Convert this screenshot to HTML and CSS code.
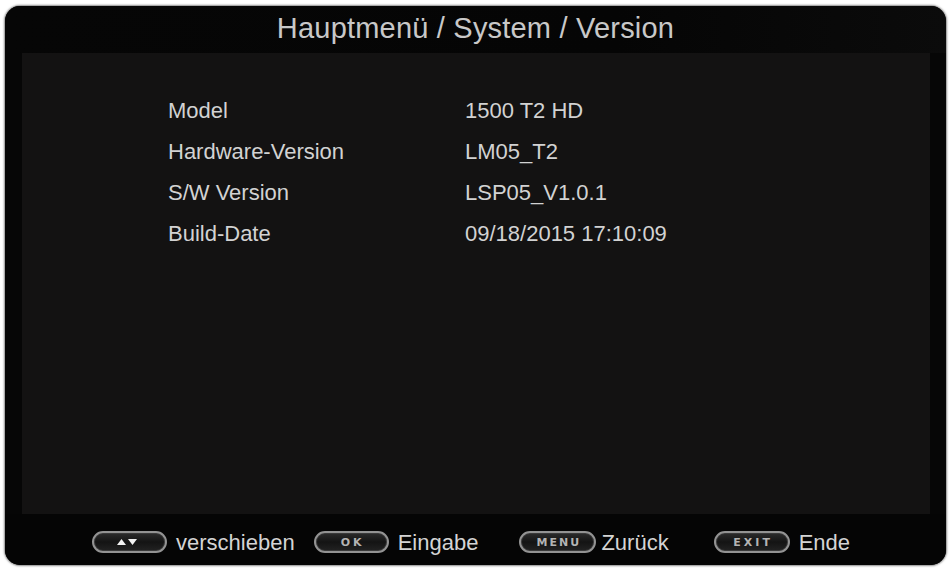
FILE: index.html
```html
<!DOCTYPE html>
<html lang="de">
<head>
<meta charset="utf-8">
<title>Hauptmenü / System / Version</title>
<link rel="stylesheet" href="styles.css">
</head>
<body>
<div class="frame">
  <header class="title">Hauptmenü / System / Version</header>
  <main class="panel">
    <div class="info">
      <div class="label">Model</div><div class="value">1500 T2 HD</div>
      <div class="label">Hardware-Version</div><div class="value">LM05_T2</div>
      <div class="label">S/W Version</div><div class="value">LSP05_V1.0.1</div>
      <div class="label">Build-Date</div><div class="value">09/18/2015 17:10:09</div>
    </div>
  </main>
  <footer class="footer">
    <div class="hint hint-move">
      <span class="pill pill-arrows"><svg width="22" height="6" viewBox="0 0 22 6"><polygon points="0,6 4.5,0 9,6" fill="#f2f2f2"/><polygon points="11,0 20,0 15.5,6" fill="#f2f2f2"/></svg></span>
      <span class="hint-text">verschieben</span>
    </div>
    <div class="hint hint-ok">
      <span class="pill">OK</span>
      <span class="hint-text">Eingabe</span>
    </div>
    <div class="hint hint-menu">
      <span class="pill">MENU</span>
      <span class="hint-text">Zurück</span>
    </div>
    <div class="hint hint-exit">
      <span class="pill">EXIT</span>
      <span class="hint-text">Ende</span>
    </div>
  </footer>
</div>
</body>
</html>
```
FILE: styles.css
```css
html, body {
  margin: 0;
  padding: 0;
  background: #ffffff;
}

body {
  font-family: "Liberation Sans", Arial, sans-serif;
  padding: 6px 4px 8px 5px;
}

.frame {
  height: 559px;
  background: #060606;
  border-radius: 15px;
  box-shadow: 0 0 2px 1px rgba(90, 90, 90, 0.7);
  display: flex;
  flex-direction: column;
  overflow: hidden;
}

.title {
  height: 47px;
  box-sizing: border-box;
  padding-bottom: 3px;
  line-height: 44px;
  text-align: center;
  font-size: 29px;
  letter-spacing: 0.2px;
  color: #c8c8c8;
  background: linear-gradient(90deg, #060606 0%, #050505 65%, #0b0b0b 100%);
}

.panel {
  height: 461px;
  margin: 0 16px 0 17px;
  background: #131212;
  box-sizing: border-box;
  padding: 37px 0 0 146px;
}

.info {
  display: grid;
  grid-template-columns: 297px auto;
  grid-auto-rows: 41px;
  line-height: 41px;
  font-size: 22px;
  color: #d2d2d2;
}

.footer {
  flex: 1;
  box-sizing: border-box;
  padding: 5px 0 0 87px;
  display: flex;
  align-items: center;
  background: #050505;
}

.hint {
  display: flex;
  align-items: center;
  gap: 9px;
}

.hint-ok { margin-left: 19px; }
.hint-menu { margin-left: 41px; gap: 5px; }
.hint-exit { margin-left: 45px; }

.hint-text {
  font-size: 22px;
  color: #d4d4d4;
  line-height: 25px;
}

.pill {
  width: 75px;
  height: 22px;
  box-sizing: border-box;
  border: 2px solid #939393;
  border-radius: 11px;
  background: linear-gradient(180deg, #2c2c2c 0%, #141414 50%, #222222 100%);
  box-shadow: inset 0 0 0 1px #3a3a3a;
  display: flex;
  align-items: center;
  justify-content: center;
  padding-left: 3px;
  font-family: "DejaVu Sans", sans-serif;
  font-size: 11px;
  font-weight: bold;
  letter-spacing: 3px;
  color: #b4b4b4;
}

.hint-menu .pill { width: 77px; letter-spacing: 2px; padding-left: 2px; }
.hint-exit .pill { width: 76px; }

.pill-arrows {
  padding-left: 0;
}

.pill-arrows svg {
  display: block;
  margin-left: -4px;
}
```
